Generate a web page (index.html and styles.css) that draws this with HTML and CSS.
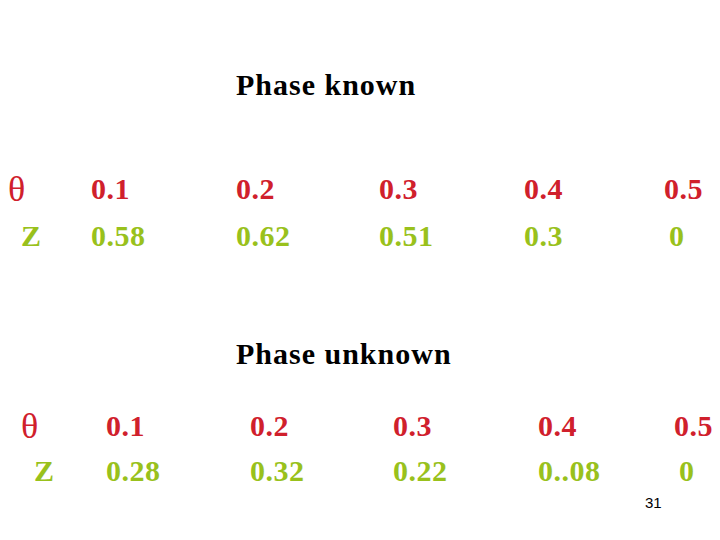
FILE: index.html
```html
<!doctype html>
<html lang="en">

<head>
    <meta charset="utf-8">
    <title>Phase known / unknown</title>
    <link rel="stylesheet" href="styles.css">
</head>

<body>
<div id="slide">
    <div class="title title-known">Phase known</div>

    <div class="table table-known">
        <div class="cell sym theta">&theta;</div>
        <div class="cell val red">0.1</div>
        <div class="cell val red">0.2</div>
        <div class="cell val red">0.3</div>
        <div class="cell val red">0.4</div>
        <div class="cell val red">0.5</div>

        <div class="cell val green z">Z</div>
        <div class="cell val green">0.58</div>
        <div class="cell val green">0.62</div>
        <div class="cell val green">0.51</div>
        <div class="cell val green">0.3</div>
        <div class="cell val green zero">0</div>
    </div>

    <div class="title title-unknown">Phase unknown</div>

    <div class="table table-unknown">
        <div class="cell sym theta">&theta;</div>
        <div class="cell val red">0.1</div>
        <div class="cell val red">0.2</div>
        <div class="cell val red">0.3</div>
        <div class="cell val red">0.4</div>
        <div class="cell val red">0.5</div>

        <div class="cell val green z">Z</div>
        <div class="cell val green">0.28</div>
        <div class="cell val green">0.32</div>
        <div class="cell val green">0.22</div>
        <div class="cell val green">0..08</div>
        <div class="cell val green zero">0</div>
    </div>

    <div class="page-num">31</div>
</div>
</body>

</html>
```
FILE: styles.css
```css
body {
    margin: 0;
    background: #ffffff;
    font-family: "Liberation Serif", "Times New Roman", serif;
}

#slide {
    width: 720px;
    height: 540px;
    display: flex;
    flex-direction: column;
}

.title {
    font-size: 30px;
    line-height: 34px;
    font-weight: bold;
    letter-spacing: 1px;
    color: #000000;
    padding-left: 236px;
}

.title-known {
    margin-top: 68px;
}

.title-unknown {
    margin-top: 85px;
}

.table {
    display: grid;
    grid-auto-rows: 32px;
}

.table-known {
    margin-top: 71px;
    padding-left: 8px;
    row-gap: 15px;
    grid-template-columns: 83px 145px 143px 145px 140px auto;
}

.table-unknown {
    margin-top: 39px;
    padding-left: 21px;
    row-gap: 13px;
    grid-template-columns: 85px 144px 143px 145px 136px auto;
}

.cell {
    font-size: 30px;
    line-height: 32px;
    white-space: nowrap;
}

.val {
    font-weight: bold;
    letter-spacing: 0.5px;
}

.sym {
    font-size: 36px;
    font-weight: normal;
}

.theta {
    color: #d0202c;
}

.red {
    color: #d0202c;
}

.green {
    color: #99c11c;
}

.z {
    padding-left: 13px;
}

.zero {
    padding-left: 5px;
}

.page-num {
    margin-top: 7px;
    padding-left: 645px;
    font-family: "Liberation Sans", Arial, sans-serif;
    font-size: 15px;
    line-height: 17px;
    color: #000000;
}
```
